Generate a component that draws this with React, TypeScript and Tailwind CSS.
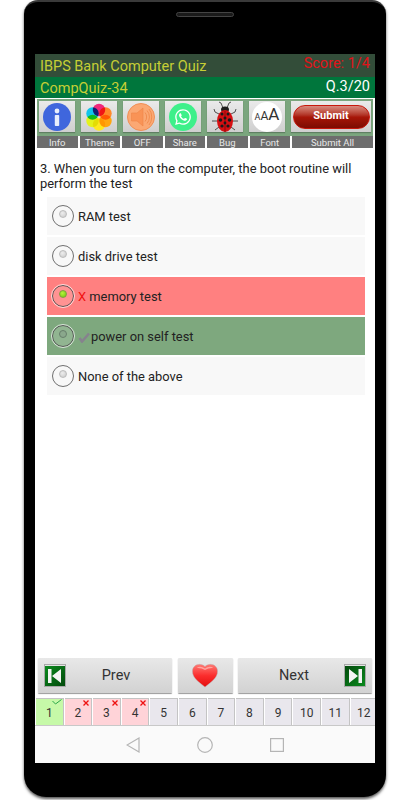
import { FaWhatsapp } from "react-icons/fa";

const tools = [
  { label: "Info", icon: <InfoIcon /> },
  { label: "Theme", icon: <ThemeIcon /> },
  { label: "OFF", icon: <SpeakerIcon /> },
  { label: "Share", icon: <ShareIcon /> },
  { label: "Bug", icon: <BugIcon /> },
  { label: "Font", icon: <FontIcon /> },
];

const options = [
  { text: "RAM test", state: "plain" },
  { text: "disk drive test", state: "plain" },
  { text: "memory test", state: "wrong" },
  { text: "power on self test", state: "right" },
  { text: "None of the above", state: "plain" },
];

const pages = [
  { n: 1, state: "right" },
  { n: 2, state: "wrong" },
  { n: 3, state: "wrong" },
  { n: 4, state: "wrong" },
  { n: 5, state: "open" },
  { n: 6, state: "open" },
  { n: 7, state: "open" },
  { n: 8, state: "open" },
  { n: 9, state: "open" },
  { n: 10, state: "open" },
  { n: 11, state: "open" },
  { n: 12, state: "open" },
];

function InfoIcon() {
  return (
    <svg viewBox="0 0 28 28" className="h-7 w-7">
      <circle cx="14" cy="14" r="14" fill="#3f66dd" />
      <circle cx="14" cy="8" r="2.4" fill="#e8eefc" />
      <rect x="11.8" y="12" width="4.4" height="11" rx="0.8" fill="#e8eefc" />
    </svg>
  );
}

function ThemeIcon() {
  return (
    <svg viewBox="0 0 28 28" className="isolate h-[28px] w-[28px]">
      <circle className="mix-blend-multiply" cx="7.500" cy="10.500" r="6.200" fill="#12c4ec" />
      <circle className="mix-blend-multiply" cx="7.500" cy="18" r="6.200" fill="#e4f21c" />
      <circle className="mix-blend-multiply" cx="14" cy="21.500" r="6.200" fill="#ffe81f" />
      <circle className="mix-blend-multiply" cx="20.500" cy="18" r="6.200" fill="#ffa60f" />
      <circle className="mix-blend-multiply" cx="20.500" cy="10.500" r="6.200" fill="#ff8a2a" />
      <circle className="mix-blend-multiply" cx="14" cy="7" r="6.200" fill="#f0287a" />
    </svg>
  );
}

function SpeakerIcon() {
  return (
    <svg viewBox="0 0 28 28" className="h-7 w-7">
      <circle cx="14" cy="14" r="13.500" fill="#fba873" stroke="#f08f55" />
      <path d="M4.500 10h5.500l6-5v18l-6-5h-5.500z" fill="#f99356" stroke="#ee8546" strokeWidth="0.6" />
      <path d="M18 9.500a7 7 0 0 1 0 9M20 7.500a10 10 0 0 1 0 13M22 6a13 13 0 0 1 0 16" fill="none" stroke="#ee8546" strokeWidth="0.8" />
    </svg>
  );
}

function ShareIcon() {
  return (
    <div className="flex h-7 w-7 items-center justify-center rounded-full bg-[#3ef08a]">
      <FaWhatsapp className="h-[18px] w-[18px] text-white" />
    </div>
  );
}

function BugIcon() {
  return (
    <svg viewBox="0 0 28 32" className="h-8 w-[28px]">
      <g stroke="#2b2b2b" strokeWidth="0.8" fill="none">
        <path d="M12 7l-2-5-2-1M16 7l2-5 2-1M8 13l-4-2-1-3M20 13l4-2 1-3M6 20l-5 0M22 20l5 0M8 26l-4 3M20 26l4 3" />
      </g>
      <ellipse cx="14" cy="8.500" rx="4" ry="3" fill="#1c1c1c" />
      <ellipse cx="14" cy="20" rx="8" ry="11" fill="#d60f12" />
      <path d="M14 10v21" stroke="#5c0505" strokeWidth="0.6" />
      <circle cx="11" cy="13" r="1.500" fill="#1a1a1a" />
      <circle cx="17" cy="13" r="1.500" fill="#1a1a1a" />
      <circle cx="9.500" cy="19" r="1.800" fill="#1a1a1a" />
      <circle cx="18.500" cy="19" r="1.800" fill="#1a1a1a" />
      <circle cx="14" cy="17" r="1.500" fill="#1a1a1a" />
      <circle cx="11" cy="25" r="1.600" fill="#1a1a1a" />
      <circle cx="17" cy="25" r="1.600" fill="#1a1a1a" />
      <circle cx="14" cy="22" r="1.400" fill="#1a1a1a" />
    </svg>
  );
}

function FontIcon() {
  return (
    <div className="flex h-[30px] w-[30px] items-baseline justify-center rounded-full bg-white pt-[4px] text-[#333]">
      <span className="text-[9px] leading-none">A</span>
      <span className="text-[12px] leading-none">A</span>
      <span className="text-[17px] leading-none">A</span>
    </div>
  );
}

function Radio({ state }: { state: string }) {
  const ring = state === "plain" ? "border-[#707070] bg-transparent" : "border-[#555] bg-white/15 outline outline-1 outline-white/70";
  const dot =
    state === "wrong"
      ? "bg-[radial-gradient(circle_at_40%_35%,#b6f23c,#6fc70c)] border-[#7f9f40]"
      : state === "right"
        ? "bg-[#8aa88c] border-[#677f6b]"
        : "bg-[radial-gradient(circle_at_40%_35%,#ededed,#c9c9c9)] border-[#bbb]";
  return (
    <div className={`flex h-[22px] w-[22px] shrink-0 justify-center rounded-full border pt-[4px] ${ring}`}>
      <div className={`h-[8px] w-[8px] rounded-full border ${dot}`} />
    </div>
  );
}

function SkipIcon({ flip }: { flip?: boolean }) {
  return (
    <div className="flex h-[23px] w-[22px] items-center justify-center border border-[#a8a8a8] bg-[#e4e4e4]">
      <svg viewBox="0 0 20 20" className={flip ? "h-5 w-5 rotate-180" : "h-5 w-5"}>
        <defs>
          <linearGradient id="skip" x1="0" y1="0" x2="1" y2="1">
            <stop offset="0" stopColor="#0b8a1e" />
            <stop offset="1" stopColor="#034a0c" />
          </linearGradient>
        </defs>
        <rect width="20" height="20" fill="url(#skip)" />
        <path d="M3 3h3.500v14H3zM16 3v14L7 10z" fill="#f4f4f4" />
      </svg>
    </div>
  );
}

function Heart() {
  return (
    <svg viewBox="0 0 28 26" className="h-[25px] w-[26px]">
      <defs>
        <linearGradient id="heart" x1="0" y1="0" x2="0" y2="1">
          <stop offset="0" stopColor="#ff7a74" />
          <stop offset="0.5" stopColor="#fb2d2d" />
          <stop offset="1" stopColor="#e30d0d" />
        </linearGradient>
      </defs>
      <path d="M14 25.500C8 20.500.500 16 .500 8.500.500 4 4 1 8 1c2.800 0 4.800 1 6 2.500C15.200 2 17.200 1 20 1c4 0 7.500 3 7.500 7.500 0 7.500-7.500 12-13.500 17z" fill="url(#heart)" stroke="#b8b0b0" strokeWidth="0.5" />
      <path d="M5 5c3-2.500 6-1.500 9 .5 3-2 6-3 9-.5-3-.5-6 .5-9 2-3-1.500-6-2.500-9-2z" fill="#ffc0ba" opacity="0.7" />
    </svg>
  );
}

export default function App() {
  return (
    <div className="h-[800px] w-[410px] overflow-hidden bg-white pl-[24px] font-['Roboto',sans-serif]">
      <div className="flex h-[797px] w-[362px] flex-col rounded-b-[22px] rounded-t-[14px] border-t-2 border-t-[#3a3a3a] bg-black px-[11px] shadow-[0_2px_3px_#555]">
        <div className="mx-auto mt-[10px] h-[5px] w-[58px] rounded-full border border-[#444] bg-[#1a1a1a]" />
        <div className="mt-[37px] flex h-[709px] flex-col bg-white">
          <div className="flex h-[23px] justify-between bg-[#334d39] px-[5px]">
            <span className="mt-[6px] text-[14.500px] leading-none text-[#c6cf35]">IBPS Bank Computer Quiz</span>
            <span className="mt-[3px] text-[14.500px] leading-none text-[#e0141a]">Score: 1/4</span>
          </div>
          <div className="flex h-[21px] justify-between bg-[#00763c] px-[5px]">
            <span className="mt-[5px] text-[14.500px] leading-none text-[#c6cf35]">CompQuiz-34</span>
            <span className="mt-[3px] text-[14.500px] leading-none text-white">Q.3/20</span>
          </div>
          <div className="mx-[2px] mt-px flex h-[37px] gap-[6px] bg-[#7ba67e] px-[2px] pt-[2px]">
            {tools.map((tool) => (
              <div
                className="flex h-[31px] w-[36px] items-center justify-center bg-gradient-to-b from-[#eaeaea] to-[#cfcfcf] shadow-[0_1px_1px_#5f7f62]"
                key={tool.label}
              >
                {tool.icon}
              </div>
            ))}
            <div className="flex h-[31px] flex-1 items-center justify-center bg-gradient-to-b from-[#eaeaea] to-[#cfcfcf] shadow-[0_1px_1px_#5f7f62]">
              <div className="flex h-[24px] w-[77px] items-center justify-center rounded-full border border-[#c8170c] bg-gradient-to-b from-[#d98a80] via-[#a81608] to-[#7c0c02] text-[11px] font-bold text-white">
                Submit
              </div>
            </div>
          </div>
          <div className="mx-[2px] flex h-[12px] gap-[2px] text-[9.500px] leading-[13px] text-[#e8e8e8]">
            {tools.map((tool) => (
              <div className="w-[40.500px] bg-[#6d6d6d] text-center" key={tool.label}>
                {tool.label}
              </div>
            ))}
            <div className="flex-1 bg-[#6d6d6d] text-center">Submit All</div>
          </div>

          <p className="mx-[5px] mt-[13px] text-[12.900px] leading-[15px] text-[#222]">
            3. When you turn on the computer, the boot routine will perform the test
          </p>

          <div className="ml-[12px] mr-[10px] mt-[6px] flex flex-col gap-[2px]">
            {options.map((option) => {
              const bg =
                option.state === "wrong" ? "bg-[#ff8080]" : option.state === "right" ? "bg-[#7ea87e]" : "bg-[#f8f8f8]";
              return (
                <div className={`flex h-[38px] items-center gap-[4px] pl-[5px] text-[12.900px] text-[#222] ${bg}`} key={option.text}>
                  <Radio state={option.state} />
                  {option.state === "right" && (
                    <svg viewBox="0 0 12 11" className="-mr-[3px] mt-[3px] h-[11px] w-[12px] shrink-0">
                      <path d="M1.500 6l2.500 3.500L11 1.500" fill="none" stroke="#86828e" strokeWidth="2.600" />
                    </svg>
                  )}
                  <span className="pt-[2px]">
                    {option.state === "wrong" && <span className="text-[#f01010]">X </span>}
                    {option.text}
                  </span>
                </div>
              );
            })}
          </div>

          <div className="flex-1" />

          <div className="ml-[3px] flex h-[35px] text-[14.500px] text-[#333]">
            <div className="flex w-[134px] items-center rounded-[1px] bg-gradient-to-b from-[#e8e8e8] to-[#d2d2d2] pl-[6px] pr-[6px] shadow-[0_1px_1px_#999]">
              <SkipIcon />
              <span className="flex-1 text-center">Prev</span>
            </div>
            <div className="ml-[6px] flex w-[55px] items-center justify-center rounded-[1px] bg-gradient-to-b from-[#e8e8e8] to-[#d2d2d2] pr-[1px] shadow-[0_1px_1px_#999]">
              <Heart />
            </div>
            <div className="ml-[5px] flex w-[134px] items-center rounded-[1px] bg-gradient-to-b from-[#e8e8e8] to-[#d2d2d2] pl-[6px] pr-[6px] shadow-[0_1px_1px_#999]">
              <span className="flex-1 text-center">Next</span>
              <SkipIcon flip />
            </div>
          </div>

          <div className="mt-[5px] flex h-[28px] gap-[1px] overflow-hidden border-b border-b-[#c8c8c8] pl-[1px] text-[12px] text-[#333]">
            {pages.map((page) => {
              const bg =
                page.state === "right" ? "bg-[#c6f9a8]" : page.state === "wrong" ? "bg-[#ffd3d8]" : "bg-[#e9e7ed]";
              return (
                <div
                  className={`relative flex h-[28px] w-[27.600px] shrink-0 items-center justify-center border-r border-t border-[#c4c4c4] ${bg}`}
                  key={page.n}
                >
                  {page.n}
                  {page.state === "right" && (
                    <svg viewBox="0 0 10 6" className="absolute right-[1px] top-0 h-[6px] w-[10px]">
                      <path d="M0.500 2l3 3 6-4.500" fill="none" stroke="#2ca84a" strokeWidth="1" />
                    </svg>
                  )}
                  {page.state === "wrong" && (
                    <svg viewBox="0 0 6 6" className="absolute right-[2px] top-[1px] h-[6px] w-[6px]">
                      <path d="M0.500 0.500l5 5M5.500 0.500l-5 5" stroke="#ee1010" strokeWidth="1.300" />
                    </svg>
                  )}
                </div>
              );
            })}
          </div>

          <div className="flex h-[37px] items-center justify-center gap-[57px] bg-[#fafafa]">
            <svg viewBox="0 0 14 16" className="h-[16px] w-[14px]">
              <path d="M13 1v14L1 8z" fill="none" stroke="#b5b5b5" strokeWidth="1.200" />
            </svg>
            <svg viewBox="0 0 16 16" className="h-[16px] w-[16px]">
              <circle cx="8" cy="8" r="7.300" fill="none" stroke="#b5b5b5" strokeWidth="1.200" />
            </svg>
            <svg viewBox="0 0 14 14" className="h-[14px] w-[14px]">
              <rect x="0.600" y="0.600" width="12.800" height="12.800" fill="none" stroke="#b5b5b5" strokeWidth="1.200" />
            </svg>
          </div>
        </div>
      </div>
    </div>
  );
}
